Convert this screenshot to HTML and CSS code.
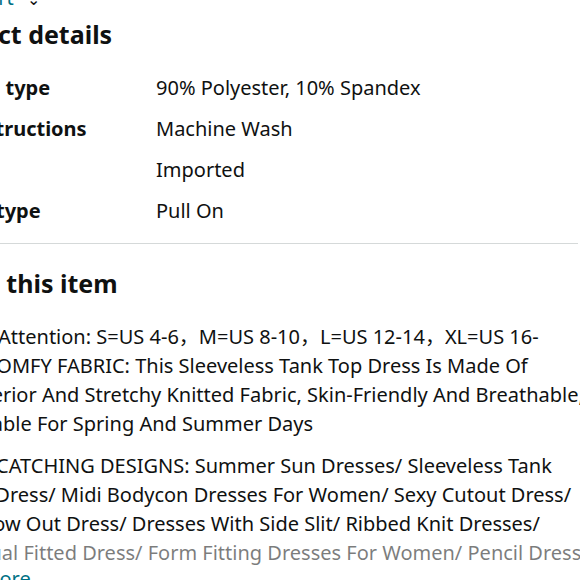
FILE: index.html
```html
<!DOCTYPE html>
<html lang="en">
<head>
<meta charset="utf-8">
<title>Product details</title>
<link rel="stylesheet" href="styles.css">
</head>
<body>
<div class="viewport">
  <div class="content">
    <a class="top-link" href="#">Size Chart <span class="chev">&#8964;</span></a>
    <h2 class="heading">Product details</h2>
    <dl class="details">
      <div class="row"><dt>Material type</dt><dd>90% Polyester, 10% Spandex</dd></div>
      <div class="row"><dt>Care instructions</dt><dd>Machine Wash</dd></div>
      <div class="row"><dt>Origin</dt><dd>Imported</dd></div>
      <div class="row"><dt>Closure type</dt><dd>Pull On</dd></div>
    </dl>
    <hr class="divider">
    <h2 class="heading heading-about">About this item</h2>
    <ul class="bullets">
      <li>Size Attention: S=US 4-6，M=US 8-10，L=US 12-14，XL=US 16-<br>18 COMFY FABRIC: This Sleeveless Tank Top Dress Is Made Of<br>Superior And Stretchy Knitted Fabric, Skin-Friendly And Breathable,<br>Suitable For Spring And Summer Days</li>
      <li class="faded">EYE-CATCHING DESIGNS: Summer Sun Dresses/ Sleeveless Tank<br>Top Dress/ Midi Bodycon Dresses For Women/ Sexy Cutout Dress/<br>Hollow Out Dress/ Dresses With Side Slit/ Ribbed Knit Dresses/<br>Casual Fitted Dress/ Form Fitting Dresses For Women/ Pencil Dress</li>
    </ul>
    <a class="more" href="#">See more</a>
  </div>
</div>
</body>
</html>
```
FILE: styles.css
```css
html, body {
  margin: 0;
  padding: 0;
  background: #fff;
}
body {
  font-family: "Noto Sans", "Noto Sans CJK SC", sans-serif;
  color: #0f1111;
}
.viewport {
  width: 580px;
  height: 580px;
  overflow: hidden;
}
.content {
  margin-left: -84px;
  width: 700px;
  margin-top: -13px;
}
.top-link {
  display: block;
  padding-left: 4px;
  color: #007185;
  text-decoration: none;
  font-size: 20px;
  line-height: 22px;
  height: 20px;
  white-space: nowrap;
}
.chev {
  color: #0f1111;
  font-size: 16px;
  margin-left: 8px;
}
.heading {
  margin: 0;
  padding-left: 8px;
  font-size: 25px;
  font-weight: 700;
  line-height: 32px;
  padding-top: 11px;
}
.details {
  margin: 24px 0 0 0;
}
.row {
  display: flex;
  height: 41px;
  align-items: flex-start;
  font-size: 20px;
  line-height: 28px;
}
.row dt {
  width: 240px;
  font-weight: 700;
  white-space: nowrap;
}
.row dd {
  margin: 0;
  white-space: nowrap;
}
.divider {
  border: 0;
  border-top: 1px solid #d5d9d9;
  margin: 5px 0 0 0;
  width: 662px;
}
.heading-about {
  padding-top: 23px;
}
.bullets {
  margin: 23px 0 0 0;
  padding-left: 40px;
  font-size: 20px;
  line-height: 29px;
  white-space: nowrap;
}
.bullets li {
  margin-bottom: 13px;
}
.faded {
  position: relative;
}
.faded::after {
  content: "";
  position: absolute;
  left: 0;
  right: 0;
  bottom: 0;
  height: 29px;
  background: rgba(255, 255, 255, 0.45);
}
.more {
  display: block;
  padding-left: 26px;
  color: #007185;
  text-decoration: none;
  font-size: 20px;
  line-height: 24px;
  margin-top: -13px;
}
```
